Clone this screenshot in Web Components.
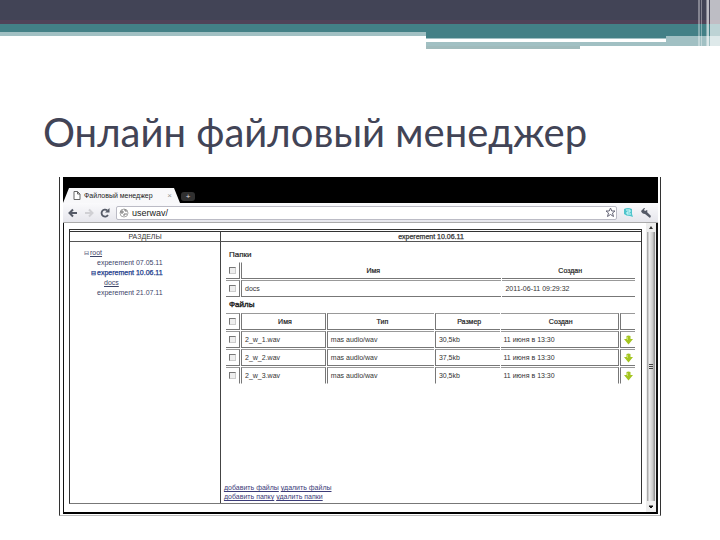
<!DOCTYPE html>
<html lang="ru">
<head>
<meta charset="utf-8">
<title>Онлайн файловый менеджер</title>
<style>
body { margin: 0; background: #fff; color: #424456; font-family: "Liberation Sans", Arial, sans-serif; }
</style>
</head>
<body>
<presentation-slide>
  <span slot="title">Онлайн файловый менеджер</span>
  <browser-window tab="Файловый менеджер" url="userwav/">
    <file-manager></file-manager>
  </browser-window>
</presentation-slide>
<script>
const define = (name, html, setup) => {
  const template = document.createElement('template');
  template.innerHTML = html;
  customElements.define(name, class extends HTMLElement {
    constructor() {
      super();
      this.attachShadow({ mode: 'open' }).append(template.content.cloneNode(true));
    }
    connectedCallback() { if (setup) setup(this, this.shadowRoot); }
  });
};

define('slide-ribbon', `
<style>
:host { display: block; position: relative; height: 49px; }
svg { display: block; width: 100%; height: 49px; }
.edge { position: absolute; right: 0; top: 0; width: 22px; }
</style>
<svg aria-hidden="true" shape-rendering="crispEdges" viewBox="0 0 720 49" preserveAspectRatio="none">
  <path fill="#424456" d="M0 0H720V24H0z"/>
  <path fill="#504358" d="M0 20H720V24H0z"/>
  <path fill="#438086" d="M0 24H720V32H0z"/>
  <path fill="#a1c0c3" d="M0 32H426V36H0z"/>
  <path fill="#438086" d="M426 32H720V36H426z"/>
  <path fill="#a1c0c3" d="M426 36H720V46H426z"/>
  <path fill="#a0bbbc" d="M426 46H580V49H426z"/>
  <path fill="#438086" d="M426 36H666V38H426z"/>
  <path fill="#fff" d="M426 39H666V42H426z"/>
</svg>
<svg class="edge" aria-hidden="true" shape-rendering="crispEdges" viewBox="0 0 22 49">
  <path fill="#fff" fill-opacity=".35" d="M0 0H2V46H0zM3 0H4V46H3zM8 0H9V46H8z"/>
  <path fill="#fff" fill-opacity=".65" d="M9 0H11V49H9zM12 0H22V49H12z"/>
</svg>`);

define('presentation-slide', `
<style>
:host { display: block; }
h1 { margin: 57px 43px 18px; font: 400 40px/53px Lato, "Open Sans", sans-serif; color: #424456; }
main { padding: 0 59px 24px; }
</style>
<slide-ribbon></slide-ribbon>
<h1><slot name="title"></slot></h1>
<main><slot></slot></main>`);

define('browser-window', `
<style>
:host { display: block; border: 1px solid #333; border-bottom-color: #bbb; border-top: 0; padding: 0 2px 1px 3px; background: #fff; }
.tabs { display: flex; align-items: flex-end; height: 26px; background: #000; }
.tab { display: flex; align-items: center; gap: 3px; height: 15px; width: 99px; padding: 0 8px 0 10px; background: #f8f8fa; clip-path: polygon(6px 0, 111px 0, 100% 100%, 0 100%); color: #222; font-size: 7px; line-height: 12px; }
.tab .name { flex: 1; white-space: nowrap; }
button { border: 0; padding: 0; background: none; display: flex; font: 8px/10px "Liberation Sans", sans-serif; color: #999; }
.new { margin: 0 0 2px 1px; width: 14px; height: 9px; border-radius: 3px; background: #303030; color: #ddd; justify-content: center; }
.bar { display: flex; align-items: center; gap: 6px; height: 19px; padding: 0 6px 0 5px; background: linear-gradient(#fafafc, #e6e6ec); border-bottom: 1px solid #aaa; }
.address { flex: 1; display: flex; align-items: center; gap: 3px; height: 14px; box-sizing: border-box; border: 1px solid #bbbbc5; border-radius: 2px; background: #fff; padding: 0 0 0 2px; }
input { flex: 1; min-width: 0; border: 0; padding: 0; outline: 0; background: none; font: 9px/12px "Liberation Sans", sans-serif; color: #222; }
.view { display: flex; border-right: 2px solid #111; border-bottom: 2px solid #000; border-left: 1px solid #111; height: 289px; }
.view slot { display: block; flex: 1; min-width: 0; }
.scroll { width: 10px; display: flex; flex-direction: column; align-items: center; justify-content: space-between; background: #eee; }
.thumb { flex: 1; width: 8px; display: flex; align-items: center; justify-content: center; background: linear-gradient(90deg, #999, #eee 30%, #ccc 70%, #888); }
svg { display: block; }
</style>
<div class="tabs">
  <div class="tab">
    <svg width="8" height="9" viewBox="0 0 8 9" fill="#fff" stroke="#666"><path d="M1 .5h3.5L7 3v5.5H1zM4.500 .5V3H7"/></svg>
    <span class="name"></span>
    <button aria-label="Закрыть вкладку">×</button>
  </div>
  <button class="new" aria-label="Новая вкладка">+</button>
</div>
<div class="bar">
  <button aria-label="Назад"><svg width="10" height="10" viewBox="0 0 10 10" fill="none" stroke="#555a66" stroke-width="2"><path d="M9 5H2M5 1.500L1.500 5 5 8.500"/></svg></button>
  <button aria-label="Вперёд"><svg width="10" height="10" viewBox="0 0 10 10" fill="none" stroke="#d0d0d4" stroke-width="2"><path d="M1 5H8M5 1.500L8.500 5 5 8.500"/></svg></button>
  <button aria-label="Обновить"><svg width="10" height="10" viewBox="0 0 10 10"><path d="M8 7A3.500 3.500 0 1 1 7.200 2.300" fill="none" stroke="#555a66" stroke-width="1.800"/><path fill="#555a66" d="M9.500 0V4.500H5z"/></svg></button>
  <div class="address">
    <svg width="10" height="10" viewBox="0 0 10 10" fill="none" stroke="#777"><circle cx="5" cy="5" r="4" stroke="#aaa"/><path d="M2 3h2v2H2zM6 1v2h2M5 8V6h3"/></svg>
    <input aria-label="Адрес" spellcheck="false">
    <button aria-label="Закладка"><svg width="11" height="11" viewBox="0 0 11 11" fill="#fff" stroke="#667"><path d="M5.500 1l1.300 3h3.200L7.500 6l1 3.500-3-2-3 2 1-3.500L1 4h3.200z"/></svg></button>
  </div>
  <button aria-label="Расширение"><svg width="11" height="11" viewBox="0 0 11 11"><path d="M1 2q4-2 8 0v5l1 3-3-1Q3 9 1 7z" fill="#50c5cc"/><path d="M3 3h4v2H4v2h4" fill="none" stroke="#dff"/></svg></button>
  <button aria-label="Настройки"><svg width="12" height="11" viewBox="0 0 12 11"><path d="M1 4l3-3 1 0-1 2 1 1 2-1q1 1 0 2l4 4-1 2-5-4q-3 0-4-3z" fill="#555a66"/></svg></button>
</div>
<div class="view">
  <slot></slot>
  <div class="scroll" aria-hidden="true">
    <svg width="8" height="9" viewBox="0 0 8 9"><path d="M4 3l2 3H2z" fill="#333"/></svg>
    <div class="thumb"><svg width="4" height="6" viewBox="0 0 4 6" stroke="#444"><path d="M0 .5h4M0 2.500h4M0 4.500h4"/></svg></div>
    <svg width="8" height="11" viewBox="0 0 8 11"><path d="M2 5h4l-2 2z" fill="#111" stroke="#111"/></svg>
  </div>
</div>`, (host, root) => {
  root.querySelector('.name').textContent = host.getAttribute('tab');
  root.querySelector('input').value = host.getAttribute('url');
});

define('folder-tree', `
<style>
:host { display: block; font-size: 7px; line-height: 10px; color: #3c4468; }
ul { list-style: none; margin: 0; padding: 0 0 0 7px; }
:host > ul { padding: 6px 0 0 14px; }
a { color: inherit; text-decoration: none; }
li li > a { margin-left: 6px; }
li li.open > a { margin-left: 0; }
.open > a::before { content: "⊟"; display: inline-block; width: 6px; text-decoration: none; font-size: 6px; }
a.line { text-decoration: underline; }
.current > a { color: #1c3c8c; -webkit-text-stroke: .25px #1c3c8c; }
</style>
<ul><li class="open"><a class="line" href="#root">root</a>
  <ul>
    <li><a href="#0705">experement 07.05.11</a></li>
    <li class="open current"><a href="#1006">experement 10.06.11</a></li>
    <li><ul><li><a class="line" href="#docs">docs</a></li></ul></li>
    <li><a href="#2107">experement 21.07.11</a></li>
  </ul>
</li></ul>`);

define('file-table', `
<style>
:host { display: block; }
table { width: 100%; table-layout: fixed; border-collapse: separate; border-spacing: 1px 1px; margin: 0 -1px; font-size: 7px; line-height: 9px; color: #333; }
th, td { height: 15px; padding: 0 0 0 3px; border: 1px solid #777; border-top-color: #999; text-align: left; font-weight: 400; white-space: nowrap; }
th { text-align: center; color: #222; -webkit-text-stroke: .2px #222; }
:is(th, td):first-child { border-left: 0; padding: 0 0 0 2px; }
:is(th, td):last-child { border-right: 0; }
.single, .open { border-right: 0; }
.open + * { border-left: 0; }
.first tr:first-child > * { border-top-color: transparent; }
.last tr:last-child > * { border-bottom-color: transparent; }
input { appearance: none; display: block; width: 7px; height: 7px; margin: 0 0 0 1px; border: 1px solid #777; border-right-color: #ccc; border-bottom-color: #ccc; background: #eee; }
td a { display: block; width: 9px; }
svg { display: block; }
</style>
<table><colgroup></colgroup><tbody></tbody></table>`, (host, root) => {
  const data = JSON.parse(host.getAttribute('data'));
  const split = Number(host.getAttribute('split'));
  root.querySelector('table').className = host.getAttribute('edge');
  data.cols.forEach(width => {
    const col = document.createElement('col');
    col.style.width = width;
    root.querySelector('colgroup').append(col);
  });
  data.rows.forEach((row, r) => {
    const tr = document.createElement('tr');
    ['', ...row].forEach((text, c) => {
      const cell = document.createElement(r ? 'td' : 'th');
      if (c === 0) {
        cell.innerHTML = '<input type="checkbox">';
        cell.firstChild.setAttribute('aria-label', r ? row[0] : 'Выбрать все');
      } else if (text === 'download') {
        cell.innerHTML = '<a href="#download" aria-label="Скачать"><svg width="9" height="10" viewBox="0 0 9 10"><path d="M2.500 1Q4.500 0 6.500 1V4H9L4.500 9.500 0 4h2.500z" fill="#a4c520"/><path d="M3.500 2v3" stroke="#c8df60"/></svg></a>';
      } else cell.textContent = text;
      if (c === split) cell.className = 'open';
      else if (c && c === split - 1) cell.className = 'single';
      tr.append(cell);
    });
    root.querySelector('tbody').append(tr);
  });
});

define('file-manager', `
<style>
:host { display: block; height: 100%; box-sizing: border-box; padding: 6px 4px 8px 5px; font-size: 7px; }
.frame { display: grid; grid-template: 12px 1fr / 151px 1fr; height: 100%; box-sizing: border-box; border: 1px solid #333; border-bottom-color: #777; }
h2 { margin: 1px 0 0; border-top: 1px solid #333; border-bottom: 1px solid #555; font: 400 7px/10px "Liberation Sans", sans-serif; text-align: center; color: #333; box-sizing: border-box; }
.bold { -webkit-text-stroke: .25px #333; }
.left { border-right: 1px solid #444; }
.right { display: flex; flex-direction: column; padding: 6px 4px 2px 5px; min-width: 0; }
h3 { margin: 0 0 0 3px; font: 400 8px/13px "Liberation Sans", sans-serif; color: #222; -webkit-text-stroke: .2px #222; }
h3 ~ h3 { line-height: 14px; -webkit-text-stroke-width: .4px; }
nav { margin-top: auto; margin-left: -2px; line-height: 9px; color: #3c3c78; }
nav a { color: inherit; }
</style>
<div class="frame">
  <h2 class="left">РАЗДЕЛЫ</h2>
  <h2 class="bold">experement 10.06.11</h2>
  <folder-tree class="left"></folder-tree>
  <div class="right">
    <h3>Папки</h3>
    <file-table split="1" edge="first" data='{"cols":["14px","64%",""],"rows":[["Имя","Создан"],["docs","2011-06-11 09:29:32"]]}'></file-table>
    <h3>Файлы</h3>
    <file-table split="3" edge="last" data='{"cols":["14px","21%","26.500%","16%","","15px"],"rows":[["Имя","Тип","Размер","Создан",""],["2_w_1.wav","mas audio/wav","30,5kb","11 июня в 13:30","download"],["2_w_2.wav","mas audio/wav","37,5kb","11 июня в 13:30","download"],["2_w_3.wav","mas audio/wav","30,5kb","11 июня в 13:30","download"]]}'></file-table>
    <nav><a href="#add-file">добавить файлы</a> <a href="#del-file">удалить файлы</a><br><a href="#add-dir">добавить папку</a> <a href="#del-dir">удалить папки</a></nav>
  </div>
</div>`);
</script>
</body>
</html>
